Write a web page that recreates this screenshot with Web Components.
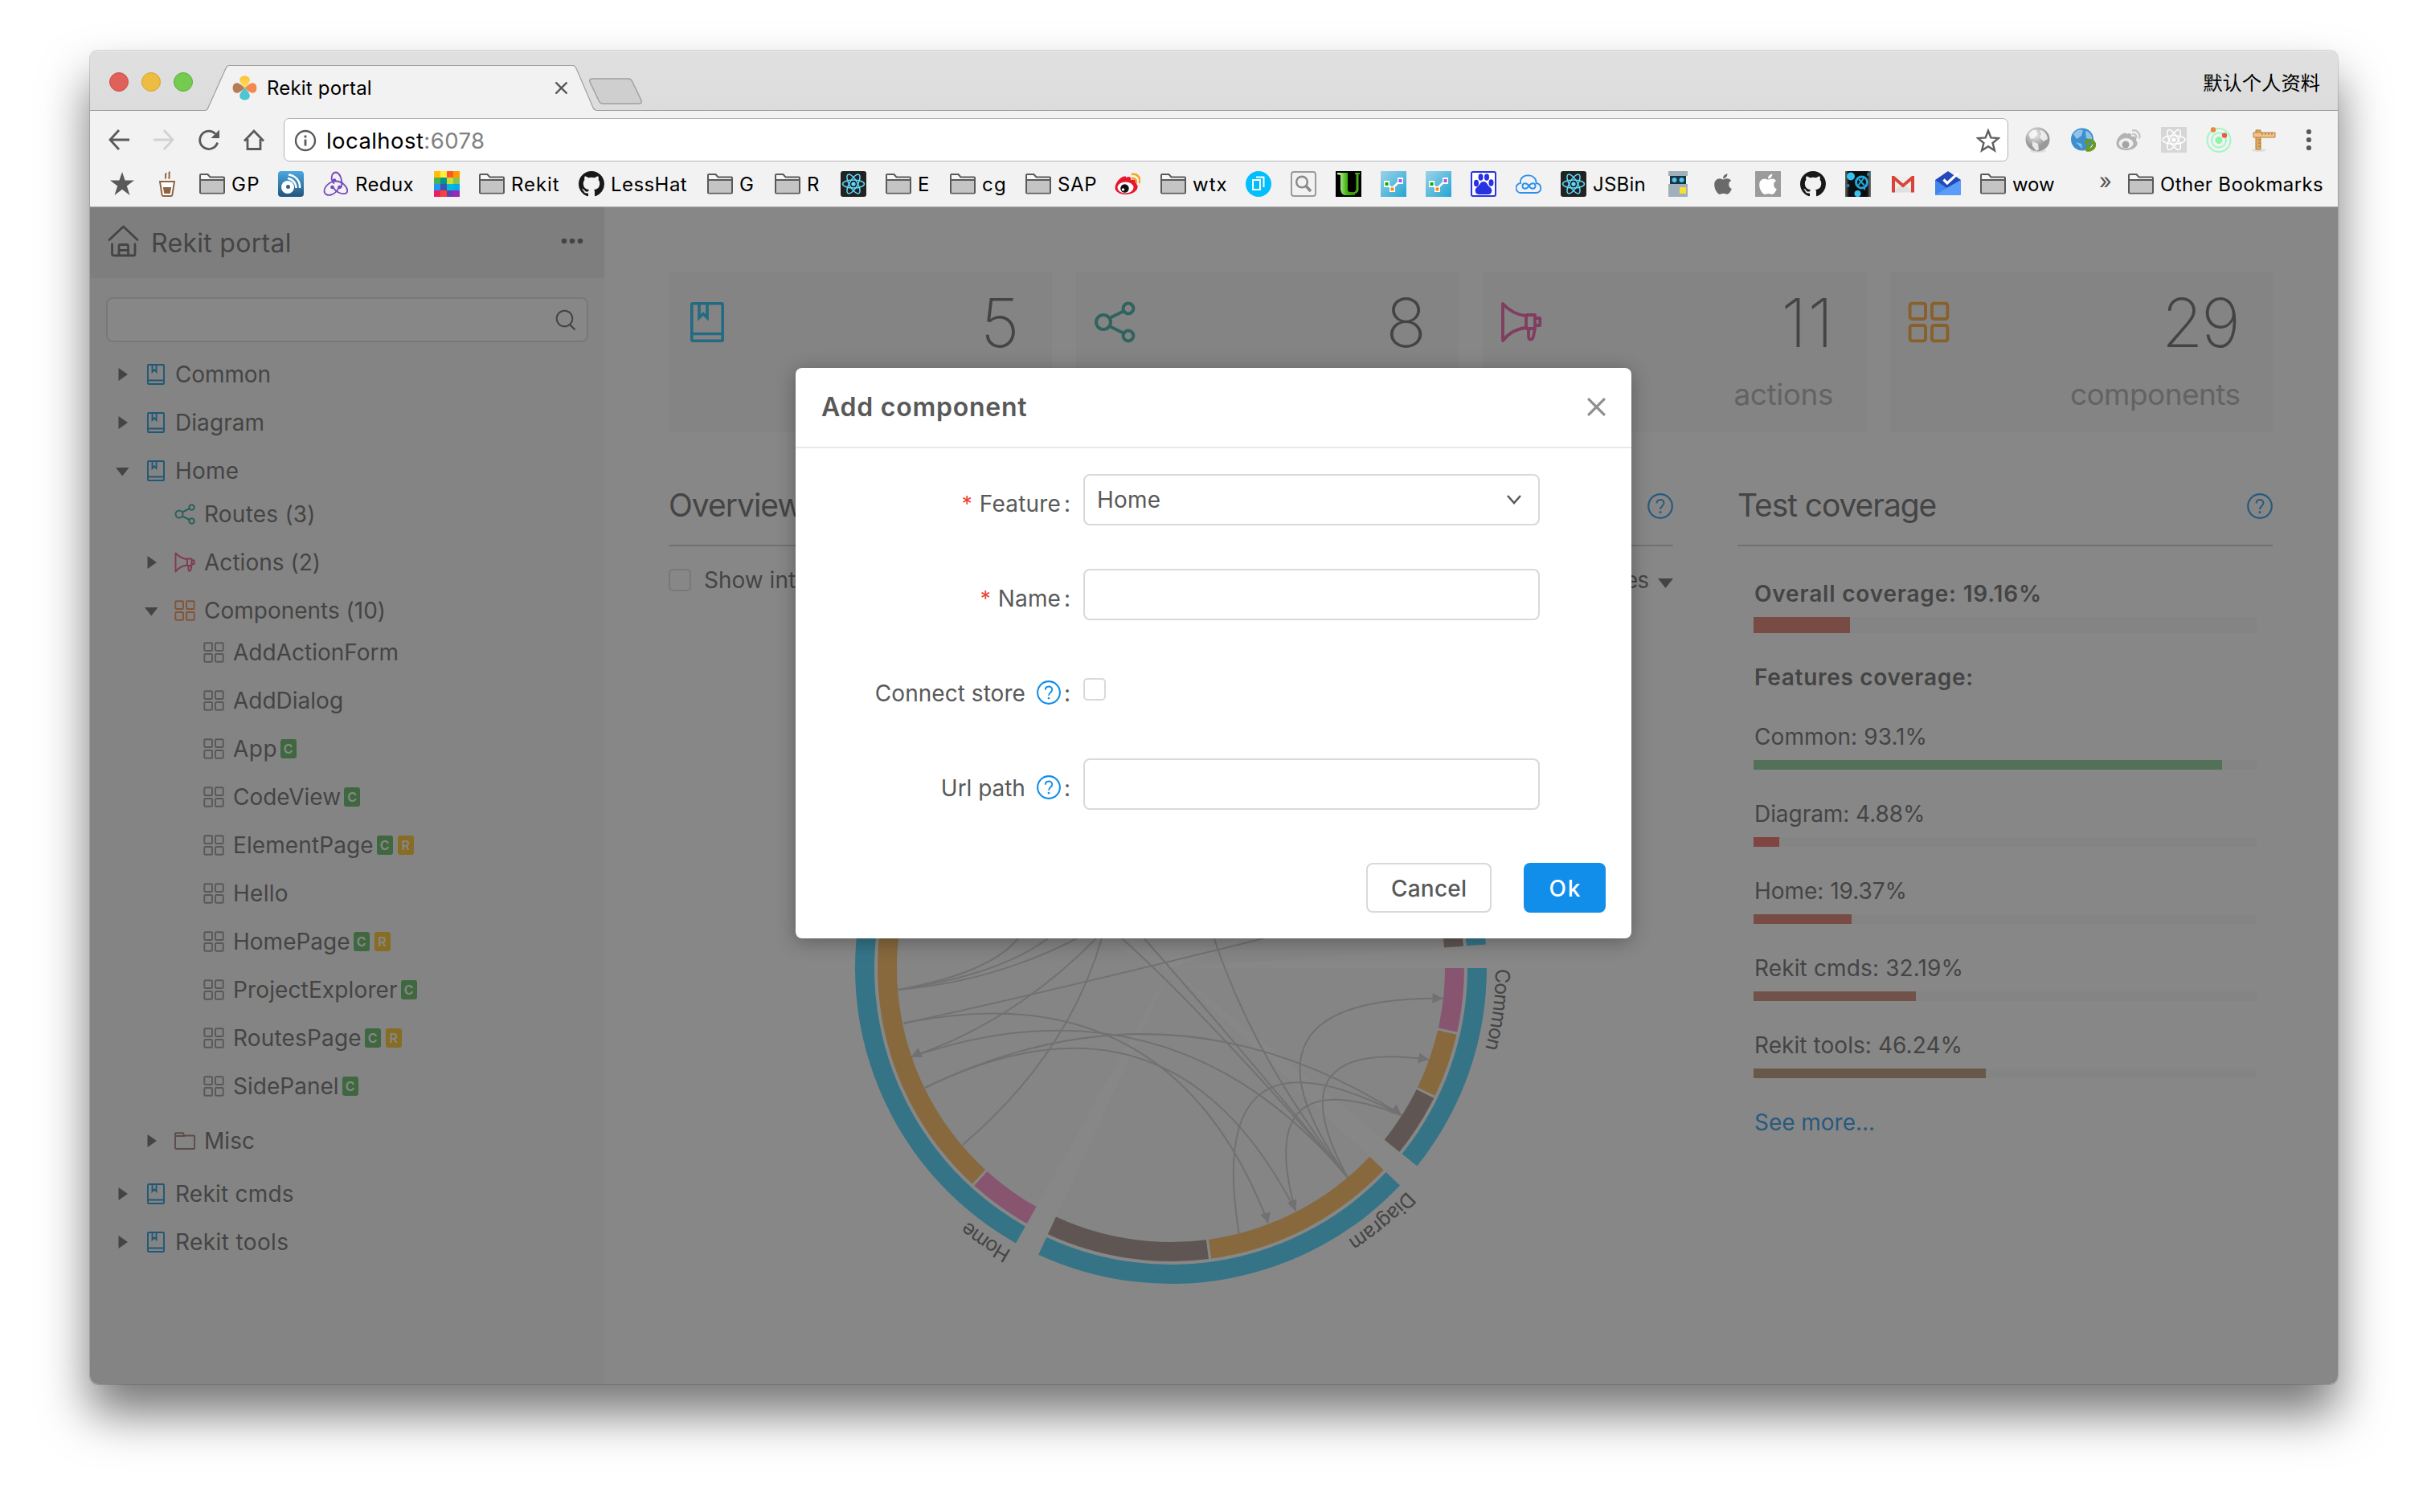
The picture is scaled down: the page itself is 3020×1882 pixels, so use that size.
<!DOCTYPE html>
<html lang="en">
<head>
<meta charset="utf-8">
<title>Rekit portal</title>
<style>
html,body{margin:0;background:#fff}
body{width:3020px;height:1882px;overflow:hidden;display:flex;justify-content:flex-start;align-items:flex-start;padding:63px 0 0 112px;box-sizing:border-box;font-family:Inter,"Liberation Sans","Noto Sans CJK SC",sans-serif;color:#595959;font-size:28px}
</style>
</head>
<body>
<browser-window></browser-window>
<script>
const ICONS = {
  back:['0 0 28 28','<path d="M14 2 3 14l11 12M3 14h24" fill="none" stroke="#5a5a5a" stroke-width="2.8"/>'],
  forward:['0 0 28 28','<path d="M14 2l11 12-11 12M25 14H1" fill="none" stroke="#d2d2d2" stroke-width="2.8"/>'],
  reload:['0 0 28 28','<path d="M24.6 17.5A11.2 11.2 0 1 1 22 6.6" fill="none" stroke="#5a5a5a" stroke-width="2.8"/><path d="M27 1.5v10.5H16.500z" fill="#5a5a5a"/>'],
  homeNav:['0 0 28 28','<path d="M2 15.500 14 3l12 12.500M6 13v12.500h16V13" fill="none" stroke="#5a5a5a" stroke-width="2.8"/>'],
  info:['0 0 28 28','<circle cx="14" cy="14" r="12" fill="none" stroke="#5a5a5a" stroke-width="2.4"/><path d="M14 12.500v8M14 7.500v3" stroke="#5a5a5a" stroke-width="2.8"/>'],
  starLine:['0 0 28 28','<path d="M14 2.500 17.200 10.600l8.800.6-6.800 5.600 2.200 8.600L14 20.700l-7.400 4.700 2.200-8.600L2 11.200l8.800-.6z" fill="none" stroke="#5f5f5f" stroke-width="2.300"/>'],
  star:['0 0 30 30','<path d="M15 0 18.600 10.600H30l-9.200 6.800L24.500 29 15 21.800 5.500 29l3.700-11.600L0 10.600h11.400z" fill="#5a5a5a"/>'],
  coffee:['0 0 20 32','<path d="M1 13h18l-2.600 16.500a2 2 0 0 1-2 1.500H5.600a2 2 0 0 1-2-1.500z" fill="#fff" stroke="#8d6546" stroke-width="2"/><path d="M4.800 20h10.400l-1.500 8H6.300z" fill="#8d6546"/><path d="M7.500 9.500c2-3-1-4 1.500-7M12 9.500c2-3-.5-5 1-9" fill="none" stroke="#8d6546" stroke-width="2"/>'],
  folder:['0 0 32 32','<path d="M1 26.500V5a1 1 0 0 1 1-1h8.500l3 3.500H30a1 1 0 0 1 1 1v18a1 1 0 0 1-1 1H2a1 1 0 0 1-1-1z" fill="#f7f7f7" stroke="#5a5a5a" stroke-width="2"/><path d="M2 11.500h28v15H2z" fill="#c4c4c4"/><path d="M1 11h30" stroke="#5a5a5a" stroke-width="2"/>'],
  feed:['0 0 32 32','<defs><linearGradient id="g" x2="0" y2="1"><stop stop-color="#4aa8e0"/><stop offset="1" stop-color="#23547f"/></linearGradient></defs><rect width="32" height="32" rx="4" fill="url(#g)"/><circle cx="12" cy="20" r="8" fill="#fff"/><circle cx="12.500" cy="19.500" r="2.500" fill="#2c6594"/><path d="M12 9a12 12 0 0 1 10.500 12M13 4.500A15 15 0 0 1 27 21" fill="none" stroke="#fff" stroke-width="2.600"/>'],
  redux:['0 0 32 32','<g fill="none" stroke="#764abc" stroke-width="1.800"><path d="M22.500 20.500C25 12 21 2 16 1.500 9.500 2 9 12 14 15.500"/><path d="M13.500 12.500C5 15 0 22 2 27c4 6 14 2 17.500-6.500"/><path d="M12.500 20c4 7 12.500 10 17 7C32.500 21 24 12 15 12.500"/></g><g fill="#764abc"><circle cx="14" cy="11.500" r="2.300"/><circle cx="20.500" cy="20" r="2.300"/><circle cx="11.500" cy="20" r="2.300"/></g>'],
  palette:['0 0 32 32', (()=>{const c=['#ffc107','#ffeb3b','#ff5722','#ff9800','#4caf50','#009688','#cddc39','#8bc34a','#2196f3','#3f51b5','#00bcd4','#03a9f4','#e91e63','#f44336','#673ab7','#9c27b0'];return c.map((f,i)=>`<rect x="${i%4*8}" y="${(i>>2)*8}" width="8" height="8" fill="${f}"/>`).join('')})()],
  github:['0 0 16 16','<path fill="#191717" d="M8 0C3.58 0 0 3.58 0 8c0 3.54 2.29 6.53 5.47 7.59.4.07.55-.17.55-.38 0-.19-.01-.82-.01-1.49-2.01.37-2.53-.49-2.69-.94-.09-.23-.48-.94-.82-1.13-.28-.15-.68-.52-.01-.53.63-.01 1.08.58 1.23.82.72 1.21 1.87.87 2.33.66.07-.52.28-.87.51-1.07-1.78-.2-3.64-.89-3.64-3.95 0-.87.31-1.59.82-2.15-.08-.2-.36-1.02.08-2.12 0 0 .67-.21 2.2.82.64-.18 1.32-.27 2-.27s1.36.09 2 .27c1.53-1.04 2.2-.82 2.2-.82.44 1.1.16 1.92.08 2.12.51.56.82 1.27.82 2.15 0 3.07-1.87 3.75-3.65 3.95.29.25.54.73.54 1.48 0 1.07-.01 1.93-.01 2.2 0 .21.15.46.55.38A8.01 8.01 0 0 0 16 8c0-4.42-3.58-8-8-8z"/>'],
  react:['0 0 32 32','<rect width="32" height="32" rx="3" fill="#222"/><g fill="none" stroke="#61dafb" stroke-width="1.500"><ellipse cx="16" cy="16" rx="13.500" ry="5"/><ellipse cx="16" cy="16" rx="13.500" ry="5" transform="rotate(60 16 16)"/><ellipse cx="16" cy="16" rx="13.500" ry="5" transform="rotate(120 16 16)"/></g><circle cx="16" cy="16" r="2.600" fill="#61dafb"/>'],
  weibo:['0 0 32 32','<path d="M14 8c4-2 7-1 6 3 5-1 8 1 7 5 4 3 1 12-12 13C6 29.500 0 25 .500 20 1 14 8 6 13 6.500c1 0 1.500.5 1 1.500z" fill="#e6162d"/><ellipse cx="13.500" cy="20.500" rx="10" ry="7" fill="#fff"/><circle cx="12.500" cy="21.500" r="5.200" fill="#111"/><circle cx="10.500" cy="23" r="1.700" fill="#fff"/><path d="M21 9c4-1 7 2 5.500 6M21 4c7-1.500 12 4.500 10 11" fill="none" stroke="#f8a01a" stroke-width="2.500"/>'],
  copy:['0 0 32 32','<circle cx="16" cy="16" r="16" fill="#00bfff"/><path d="M9 11h9v12H9zM13 7.500h9.500V20" fill="none" stroke="#fff" stroke-width="2"/>'],
  find:['0 0 32 32','<rect x="1" y="1" width="30" height="30" rx="3" fill="#f2f2f2" stroke="#9a9a9a" stroke-width="2"/><circle cx="14" cy="13.500" r="6.800" fill="none" stroke="#8a8a8a" stroke-width="2.500"/><path d="m19 18.500 6 6.500" stroke="#8a8a8a" stroke-width="3.500"/>'],
  green:['0 0 32 32','<defs><linearGradient id="g"><stop stop-color="#d8ffc0"/><stop offset=".5" stop-color="#49b818"/><stop offset="1" stop-color="#2d8a00"/></linearGradient></defs><rect width="32" height="32" fill="#000"/><path d="M2 2h13v20c0 3 1 4 4 4h5v4h-13C8 29 6 26 6 21V5L2 4z" fill="url(#g)"/><path d="M24 2h6v2h-1.500v18c0 4-2 6-6 6v-2c2 0 3-2 3-5V4H24z" fill="#49a820"/>'],
  flow:['0 0 32 32','<defs><linearGradient id="g" x2="1" y2="1"><stop stop-color="#9bd3e8"/><stop offset="1" stop-color="#24a5d3"/></linearGradient></defs><rect width="32" height="32" fill="url(#g)"/><path d="M8 16l6 6 10-10" stroke="#fff" stroke-width="2.500" fill="none"/><path d="M4 12h7v8H4zM21 8h7v8h-7zM11 19h7v7h-7z" fill="#fff"/><path d="M5.500 14h4v4h-4z" fill="#0ab000"/><path d="M22.500 10h4v4h-4z" fill="#a855f7"/><path d="M12.500 20.500h4v4h-4z" fill="#ff8c00"/>'],
  paw:['0 0 32 32','<rect x="1" y="1" width="30" height="30" rx="2" fill="#fff" stroke="#2932e1" stroke-width="2"/><g fill="#2932e1"><ellipse cx="7" cy="15" rx="3" ry="4.200"/><ellipse cx="12.500" cy="7.500" rx="3" ry="4.200"/><ellipse cx="20" cy="7.500" rx="3" ry="4.200"/><ellipse cx="25.500" cy="14.500" rx="3" ry="4.200"/><path d="M16 13c4 0 4 3 7 6 3 2.500 4 4 3 7-1 4-6 3-10 3s-9 1-10-3c-1-3 0-4.500 3-7s3-6 7-6z"/></g>'],
  cloud:['0 0 32 32','<path d="M7 27a6 6 0 0 1-1-12C5 8 11 5 15.500 5.500 21 5 26 9 25.500 15 33 16 33 26 26 27z" fill="none" stroke="#2b8ff0" stroke-width="1.800"/><path d="M16.500 18.500c-2.500-4-8-4.500-8 0s5.500 4 8 0 8-4.500 8 0-5.500 4-8 0z" fill="none" stroke="#2b8ff0" stroke-width="2"/>'],
  robot:['0 0 32 32','<path d="M4 0h24v6h-2v10h2v16H4V16h2V6H4z" fill="#9fb0ba"/><path d="M6 6h20v10H6z" fill="#17353f"/><circle cx="11.500" cy="11" r="3" fill="#4fc3f7"/><circle cx="20.500" cy="11" r="3" fill="#4fc3f7"/><path d="M18 20h8v8h-8z" fill="#f9e02e"/>'],
  apple:['0 0 384 512','<path fill="#6a6a6a" d="M318.7 268.7c-.2-36.7 16.4-64.4 50-84.8-18.8-26.9-47.2-41.7-84.7-44.6-35.500-2.8-74.3 20.7-88.500 20.700-15 0-49.400-19.700-76.400-19.700C63.3 141.2 4 184.800 4 273.500q0 39.300 14.400 81.200c12.800 36.700 59 126.700 107.200 125.200 25.200-.6 43-17.900 75.800-17.900 31.800 0 48.300 17.900 76.400 17.900 48.600-.7 90.400-82.500 102.600-119.300-65.200-30.700-61.700-90-61.700-91.900zm-56.600-164.200c27.300-32.400 24.800-61.900 24-72.500-24.100 1.400-52 16.400-67.900 34.900-17.500 19.800-27.800 44.300-25.600 71.900 26.100 2 49.900-11.400 69.500-34.300z"/>'],
  appleBox:['-87 -28 560 560','<rect x="-200" y="-100" width="800" height="800" fill="#9b9b9b"/><path fill="#fff" d="M318.7 268.7c-.2-36.7 16.4-64.4 50-84.8-18.8-26.9-47.2-41.7-84.7-44.6-35.500-2.8-74.3 20.7-88.500 20.700-15 0-49.400-19.700-76.400-19.700C63.3 141.2 4 184.800 4 273.500q0 39.300 14.400 81.200c12.800 36.700 59 126.700 107.200 125.200 25.200-.6 43-17.900 75.800-17.900 31.800 0 48.300 17.900 76.400 17.900 48.600-.7 90.400-82.500 102.600-119.300-65.200-30.700-61.700-90-61.700-91.900zm-56.600-164.200c27.300-32.400 24.800-61.900 24-72.500-24.100 1.400-52 16.400-67.900 34.900-17.500 19.800-27.800 44.300-25.600 71.900 26.100 2 49.900-11.400 69.500-34.300z"/>'],
  tech:['0 0 32 32','<defs><linearGradient id="g"><stop stop-color="#6a6a6a"/><stop offset=".15" stop-color="#0b0f12"/><stop offset=".85" stop-color="#0b0f12"/><stop offset="1" stop-color="#777"/></linearGradient></defs><rect width="32" height="32" fill="url(#g)"/><circle cx="7" cy="6.500" r="5" fill="#35c3ee"/><circle cx="15.500" cy="28" r="4" fill="#35c3ee"/><circle cx="3.500" cy="18" r="2" fill="#1d87aa"/><circle cx="20.500" cy="14" r="7" fill="none" stroke="#25a5d6" stroke-width="3"/><path d="M17 10l7 8M23 9l-7 9M22 20l3 3" stroke="#25a5d6" stroke-width="2"/><circle cx="29" cy="4" r="2" fill="#1d87aa"/>'],
  gmail:['0 0 32 32','<path d="M2 6.500h28v20H2z" fill="#eee"/><path d="M2 26.500 16 15l14 11.500z" fill="#e0e0e0"/><path d="M5 6 16 15.500 27 6h3v20.500h-4V12L16 20.500 6 12v14.500H2V6z" fill="#d9433a"/>'],
  inbox:['0 0 32 32','<path d="M0 11 16 0l16 11v17a2 2 0 0 1-2 2H2a2 2 0 0 1-2-2z" fill="#2449b8"/><path d="M0 11l16 11L0 30z" fill="#4187ee"/><path d="M32 11v17a2 2 0 0 1-2 2H0l16-10z" fill="#5a9df8"/><path d="M10.500 10.500l4.500 4.500L28.500 2.500" fill="none" stroke="#fff" stroke-width="3.200"/>'],
  rekit:['0 0 32 32','<defs><linearGradient id="g" x2="0" y2="1"><stop stop-color="#fbc02d"/><stop offset="1" stop-color="#ffe070"/></linearGradient></defs><path d="M16 16C11 11 9.500 8 9.500 5.500 10 -1 22 -1 22.500 5.500 22.500 8 21 11 16 16z" fill="url(#g)"/><path d="M16 16c5-5 8-6.500 10.500-6.500 6.500.5 6.500 12.500 0 13C24 22.500 21 21 16 16z" fill="#f5894d"/><path d="M16 16c5 5 6.500 8 6.500 10.500-.5 6.500-12.500 6.500-13 0C9.500 24 11 21 16 16z" fill="#4cc6cf"/><path d="M16 16c-5 5-8 6.500-10.500 6.500-6.500-.5-6.500-12.500 0-13C8 9.500 11 11 16 16z" fill="#b57c58"/>'],
  globe:['0 0 32 32','<defs><radialGradient id="g" cx=".4" cy=".3"><stop stop-color="#eee"/><stop offset="1" stop-color="#999"/></radialGradient></defs><ellipse cx="16" cy="30" rx="10" ry="2" fill="#ddd"/><circle cx="15.500" cy="15.500" r="15" fill="url(#g)"/><path d="M4 9c3-5 7-6 10-5l1 5-4 5-4 1zM18 4c6 0 10 6 10 11l-5 3-5-5 2-4zM9 18l7 3 1 7-3 2-5-6z" fill="#fafafa" opacity=".8"/>'],
  globeBlue:['0 0 32 32','<circle cx="15" cy="15.500" r="14" fill="#3f8fcf"/><path d="M4 9c4-6 9-6 12-5l-2 7-6 4zM19 5c6 1 9 7 8 11l-7-2zM7 19l7 2 1 6z" fill="#9fcdee" opacity=".85"/><path d="M19 21c3-6 9-5 11 0 1 6-6 9-10 7M25 22l-5 6" fill="none" stroke="#6b9a1f" stroke-width="4.200"/>'],
  weiboGray:['0 0 32 32','<path d="M14 9c4-2 7-1 6 3 5-1 7 1 6 5 4 3 1 11-11 12C6 29.500 1 25 1.500 20 2 14 8 7 13 7.500c1 0 1.500.5 1 1.500z" fill="#b3b3b3"/><ellipse cx="13.500" cy="20.500" rx="9" ry="6.500" fill="#f0f0f0"/><circle cx="13" cy="22" r="4.500" fill="#a4a4a4"/><path d="M21 9c4-1 6 2 5 5M21 4.500c6-1.500 11 4 9 10" fill="none" stroke="#c4c4c4" stroke-width="2.300"/>'],
  reactGray:['0 0 32 32','<rect width="32" height="32" fill="#d6d6d6"/><g fill="none" stroke="#fff" stroke-width="1.500"><ellipse cx="16" cy="16" rx="14" ry="5.200"/><ellipse cx="16" cy="16" rx="14" ry="5.200" transform="rotate(60 16 16)"/><ellipse cx="16" cy="16" rx="14" ry="5.200" transform="rotate(120 16 16)"/></g><circle cx="16" cy="16" r="2.600" fill="#fff"/>'],
  radar:['0 0 32 32','<g fill="none" stroke="#a0f7c4" stroke-width="2"><circle cx="16" cy="16.500" r="14.500"/><circle cx="16" cy="16.500" r="9"/></g><circle cx="16" cy="16.500" r="4.500" fill="#8ff5a8"/><circle cx="9" cy="3.500" r="3.200" fill="#e58a3c"/><circle cx="23" cy="10.500" r="3.200" fill="#de6043"/>'],
  ruler:['0 0 32 32','<ellipse cx="10" cy="29" rx="9" ry="1.800" fill="#ddd"/><path d="M6 4h6v24H6z" fill="#dfa965" stroke="#b27a36"/><path d="M3 7h27v6H3z" fill="#efc48a" stroke="#b97f3c"/><path d="M14 7v3M18 7v3M22 7v3M26 7v3M9 16h3M9 20h3M9 24h3" stroke="#a06a2c"/>'],
  dots:['0 0 32 32','<g fill="#5a5a5a"><circle cx="16" cy="6" r="3.100"/><circle cx="16" cy="16" r="3.100"/><circle cx="16" cy="26" r="3.100"/></g>'],
  x:['0 0 24 24','<path d="M3 3l18 18M21 3 3 21" stroke="currentColor" stroke-width="3.200" stroke-linecap="round"/>'],
  house:['0 0 40 40','<g fill="none" stroke="currentColor" stroke-width="2.800" stroke-linecap="round" stroke-linejoin="round"><path d="M2 18.500 19.500 2 37 18.500"/><path d="M5.500 24v12q0 2 2 2h25q1.500 0 1.500-2V24"/><path d="M14 37V26.500q0-2 2-2h7.500q2 0 2 2V37M14 31.500h11.500"/></g>'],
  ellipsis:['0 0 28 10','<g fill="currentColor"><circle cx="4" cy="5" r="3.300"/><circle cx="14" cy="5" r="3.300"/><circle cx="24" cy="5" r="3.300"/></g>'],
  search:['0 0 28 28','<circle cx="12.500" cy="12.500" r="9.800" fill="none" stroke="currentColor" stroke-width="2"/><path d="m19 20 6.500 6.500" stroke="currentColor" stroke-width="2.300"/>'],
  book:['0 0 28 28','<g fill="none" stroke="currentColor" stroke-width="1.900"><rect x="4" y="2" width="20" height="24" rx="1"/><path d="M4 21.500h20M9.500 2v9l2.500-2.600L14.500 11V2"/></g>'],
  bookBig:['0 0 56 56','<g fill="none" stroke="currentColor" stroke-width="3.600"><rect x="8.800" y="4.800" width="38.400" height="46.400" rx="1.500"/><path d="M8 42.500h40M18 5v17.500l5-5 5 5V5"/></g>'],
  share:['0 0 28 28','<g fill="none" stroke="currentColor" stroke-width="2"><circle cx="7" cy="14" r="4.500"/><circle cx="22.500" cy="5.500" r="3.200"/><circle cx="22.500" cy="22.500" r="3.200"/><path d="m10.800 11.500 9-4.500M10.800 16.500l9 4.500"/></g>'],
  horn:['0 0 28 28','<g fill="none" stroke="currentColor" stroke-width="1.900" stroke-linejoin="round"><path d="M2.500 2.500v23c4-5 9-7.500 14.500-8V10C11.500 9.500 6.500 7 2.500 2.500zM17 9.500h5.500v8.500H17M23 11.500h2.600v4.500H23M18.500 18v4.500c0 3 2 3 3 .5l1-5"/></g>'],
  grid:['0 0 28 28','<g fill="none" stroke="currentColor" stroke-width="1.900"><rect x="2.300" y="2.300" width="9.700" height="9.700" rx="1.300"/><rect x="16" y="2.300" width="9.700" height="9.700" rx="1.300"/><rect x="2.300" y="16" width="9.700" height="9.700" rx="1.300"/><rect x="16" y="16" width="9.700" height="9.700" rx="1.300"/></g>'],
  misc:['0 0 28 28','<path d="M2 23V5q0-.800.800-.800h9l1.500 3.300h12q.800 0 .800.800V23q0 1-1 1H3q-1 0-1-1zM2 8h12" fill="none" stroke="currentColor" stroke-width="1.900"/>'],
  right:['0 0 24 24','<path d="M7.500 4l11.500 8-11.500 8z" fill="currentColor"/>'],
  down:['0 0 24 24','<path d="M4 8h16.500l-8.200 10.500z" fill="currentColor"/>'],
  caret:['0 0 24 24','<path d="M3 7h19l-9.500 12z" fill="currentColor"/>'],
  chevron:['0 0 20 14','<path d="m2 2 8 9 8-9" fill="none" stroke="currentColor" stroke-width="2.500"/>'],
  help:['0 0 32 32','<circle cx="16" cy="16" r="14.800" fill="none" stroke="currentColor" stroke-width="2.200"/><path d="M11.500 12.500c0-6 9-6 9-.5 0 4-4.500 4-4.500 8" fill="none" stroke="currentColor" stroke-width="2"/><circle cx="16" cy="23.500" r="1.500" fill="currentColor"/>']
};

class Base extends HTMLElement {
  connectedCallback(){
    if(this.shadowRoot) return;
    this.attachShadow({mode:'open'}).innerHTML = `<style>*{box-sizing:border-box}${this.css()}</style>${this.html()}`;
  }
  a(n,d=''){return this.getAttribute(n) ?? d}
  css(){return ''}
  html(){return '<slot></slot>'}
}
const def=(n,c)=>customElements.define(n,c);
const icon=(n,w,h=w)=>`<ui-icon name="${n}" w="${w}" h="${h}"></ui-icon>`;
const fit=(t,w)=>`<fit-text w="${w}">${t}</fit-text>`;

def('ui-icon', class extends Base {
  css(){return `:host{display:inline-flex;flex:none;width:${this.a('w')}px;height:${this.a('h')}px}svg{display:block;width:100%;height:100%}`}
  html(){const [vb,b]=ICONS[this.a('name')];return `<svg viewBox="${vb}">${b}</svg>`}
});

/* Text tracked so its ink spans the given width. */
const fits=new Set();
def('fit-text', class extends Base {
  connectedCallback(){super.connectedCallback();fits.add(this)}
  css(){return `:host{display:inline-block;white-space:nowrap;flex:none}`}
  fit(){
    const n=this.textContent.length, fs=parseFloat(getComputedStyle(this).fontSize);
    const nat=this.getBoundingClientRect().width, target=+this.a('w')+fs*.11;
    if(n>1){const ls=(target-nat)/(n-1);this.style.letterSpacing=ls.toFixed(3)+'px';this.style.marginRight=(-ls).toFixed(3)+'px'}
  }
});

def('browser-tab', class extends Base {
  css(){return `:host{position:relative;display:flex;align-items:center;width:486px;height:57px;padding:0 35px 0 33px;color:#000;font-size:24px}
  .bg{position:absolute;left:0;top:0;width:486px;height:57px}
  ui-icon{position:relative}fit-text{position:relative;margin-left:12px}.c{margin-left:auto;color:#555}`}
  html(){return `<svg class="bg" viewBox="0 0 486 57"><path d="M0 57V56q2 0 3-3L25 4q1.500-3.500 4-3.500H457q2.500 0 4 3.500L482 53q1 3 4 3v1z" fill="#f2f2f2"/><path d="M0 56q2 0 3-3L25 4q1.500-3.500 4-3.500H457q2.500 0 4 3.500L482 53q1 3 4 3" fill="none" stroke="#a0a0a0" stroke-width="1.200"/></svg>
  ${icon('rekit',31)}${fit('Rekit portal',128)}<span class="c">${icon('x',17)}</span>`}
});

def('tab-strip', class extends Base {
  css(){return `:host{display:flex;height:75px;background:linear-gradient(#e0e0e0,#dcdcdc);box-shadow:inset 0 -1px #a0a0a0,inset 0 1px #ededed;padding-left:24px;color:#000}
  .l{display:flex;gap:16px;align-items:center;padding-top:3px}.l i{width:24px;height:24px;border-radius:50%;border:1px solid}
  browser-tab{margin:18px 0 0 16px}.n{margin:34px 0 0 -10px;width:68px;height:33px}
  .p{margin-left:auto;padding:3px 22px 0 0;align-self:center;font:24.300px "Noto Sans CJK SC",sans-serif;line-height:32px}`}
  html(){return `<div class="l"><i style="background:#e0605a;border-color:#cd4b45"></i><i style="background:#edbd41;border-color:#d6a32c"></i><i style="background:#74cb50;border-color:#58b135"></i></div>
  <browser-tab></browser-tab><svg class="n" viewBox="0 0 68 33"><path d="M5 1h45q3 0 4.500 3L66 28q1 4-3 4H18q-3 0-4.500-3L2 5q-1-4 3-4z" fill="#cfcfcf" stroke="#a0a0a0" stroke-width="1.500"/></svg>
  <div class="p">默认个人资料</div>`}
});

def('nav-bar', class extends Base {
  css(){return `:host{display:flex;align-items:center;height:72px;padding-left:22px}
  .n{display:flex;gap:28px}.o{display:flex;align-items:center;margin-left:23px;width:2146px;height:54px;border:1.500px solid #b4b4b4;border-radius:7px;background:#fff;padding:1px 9px 0 12px;font-size:27.500px;color:#000}
  fit-text{margin:1px 0 0 12px}fit-text span{color:#808080}.s{margin-left:auto;display:flex}.e{display:flex;gap:24.200px;margin-left:21px}`}
  html(){return `<div class="n">${['back','forward','reload','homeNav'].map(n=>icon(n,28)).join('')}</div>
  <div class="o">${icon('info',28)}${fit('localhost<span>:6078</span>',194)}<span class="s">${icon('starLine',30)}</span></div>
  <div class="e">${['globe','globeBlue','weiboGray','reactGray','radar','ruler','dots'].map(n=>icon(n,32)).join('')}</div>`}
});

/* icon, start, label, label width */
const MARKS=[['star',137],['coffee',198],['folder',248,'GP',32],['feed',346],['redux',402,'Redux',70],['palette',540],['folder',596,'Rekit',57],['github',720,'LessHat',92],['folder',880,'G',16],['folder',964,'R',14],['react',1046],['folder',1102,'E',12],['folder',1182,'cg',27],['folder',1276,'SAP',46],['weibo',1387],['folder',1444,'wtx',40],['copy',1550],['find',1606],['green',1662],['flow',1718],['flow',1774],['paw',1830],['cloud',1886],['react',1942,'JSBin',63],['robot',2072],['apple',2133],['appleBox',2184],['github',2240],['tech',2296],['gmail',2352],['inbox',2408],['folder',2464,'wow',50],['more',2612],['folder',2648,'Other Bookmarks',200]];
def('bookmark-bar', class extends Base {
  css(){return `:host{display:flex;height:48px;padding:0 0 10px 25px;border-bottom:1.500px solid #a9a9a9;color:#000;font-size:24px}
  .b{display:flex;align-items:center;gap:8px;flex:none}fit-text{padding-top:1px}.m{font-size:27px;color:#555;line-height:20px;padding-bottom:6px}`}
  html(){return MARKS.map(([i,x,t,w],k)=>{const nx=MARKS[k+1]?.[1]??2896;
    const ic=i==='more'?'<span class="m">»</span>':i==='coffee'?icon(i,20,32):i==='star'?icon(i,30):i==='apple'?icon(i,22,30):icon(i,32);
    return `<div class="b" style="width:${nx-x}px">${ic}${t?fit(t,w):''}</div>`}).join('')}
});

def('tree-row', class extends Base {
  css(){const l=+this.a('level','0');return `:host{display:flex;align-items:center;height:60px;padding-left:${28+36*l}px}
  .t{width:24px;display:flex;color:#595959}.i{width:32px;margin:0 8px 0 14px;display:flex;justify-content:center;color:${this.a('color')}}
  .g{display:flex;gap:6px;margin-left:4px}.g b{width:20px;height:24px;border-radius:3px;font:600 16px/24px Inter;color:#fff;text-align:center}.C{background:#4cb24f}.R{background:#ffbb08}`}
  html(){const o=this.a('open');const tags=this.a('tags');
    return `<span class="t">${o?icon(o,24):''}</span><span class="i">${icon(this.a('icon'),28)}</span><fit-text w="${this.a('w')}">${this.a('label')}</fit-text>${tags?`<span class="g">${[...tags].map(c=>`<b class="${c}">${c}</b>`).join('')}</span>`:''}`}
});

def('side-panel', class extends Base {
  css(){return `:host{display:flex;flex-direction:column;background:#f7f7f7}
  header{display:flex;align-items:center;height:88px;background:#e9e9e9;padding:0 26px 4px 22px;font-size:32px}
  header fit-text{margin:4px 0 0 14px}header .e{margin-left:auto;display:flex}
  .s{display:flex;justify-content:flex-end;align-items:center;height:56px;margin:24px 20px 10px;padding-right:12px;border:2px solid #d9d9d9;border-radius:8px;background:#fff}
  .d1{margin-top:-6px}.d2{margin-top:-8px}.u2{margin-top:8px}.u1{margin-top:6px}`}
  html(){
    const B='#0288d1',G='#8a8a8a';
    const r=(l,o,i,c,t,w,tags='',cls='')=>`<tree-row class="${cls}" level="${l}" open="${o}" icon="${i}" color="${c}" label="${t}" w="${w}" tags="${tags}"></tree-row>`;
    return `<header>${icon('house',40)}${fit('Rekit portal',171)}<span class="e">${icon('ellipsis',28,10)}</span></header>
    <div class="s">${icon('search',28)}</div>
    ${r(0,'right','book',B,'Common',116)}${r(0,'right','book',B,'Diagram',108)}${r(0,'down','book',B,'Home',76)}
    ${r(1,'','share','#1a9e90','Routes (3)',135.500,'','d1')}${r(1,'right','horn','#ec407a','Actions (2)',142)}${r(1,'down','grid','#f08036','Components (10)',223)}
    ${r(2,'','grid',G,'AddActionForm',203,'','d2')}${[['AddDialog',134],['App',51.5,'C'],['CodeView',131,'C'],['ElementPage',171.5,'CR'],['Hello',65.5],['HomePage',142.5,'CR'],['ProjectExplorer',201.5,'C'],['RoutesPage',156.5,'CR'],['SidePanel',128.5,'C']].map(([t,w,g])=>r(2,'','grid',G,t,w,g||'')).join('')}
    ${r(1,'right','misc','#8d6e63','Misc',60,'','u2')}${r(0,'right','book',B,'Rekit cmds',144.500,'','u1')}${r(0,'right','book',B,'Rekit tools',138)}`}
});

def('stat-card', class extends Base {
  css(){return `:host{display:flex;justify-content:space-between;background:#f7f7f7;height:200px;padding:0 40px 0 20px}
  .i{color:${this.a('color')};padding-top:35px}.r{display:flex;flex-direction:column;align-items:flex-end}
  .n{font-size:84px;font-weight:200;line-height:100px;height:100px;margin-top:14px}.l{font-size:37px;line-height:44px;color:#a5a5a5;margin-top:17px}`}
  html(){return `<span class="i">${icon(this.a('icon'),56)}</span><div class="r"><div class="n">${fit(this.a('n'),this.a('nw'))}</div><div class="l">${this.a('label')?fit(this.a('label'),this.a('w')):''}</div></div>`}
});

def('section-head', class extends Base {
  css(){return `:host{display:flex;justify-content:space-between;align-items:center;height:82px;padding-bottom:20px;border-bottom:2px solid #c8c8c8;font-size:39px}.h{color:#108ee9;display:flex;padding-top:3px}`}
  html(){return `${fit(this.a('label'),this.a('w'))}<span class="h">${icon('help',32)}</span>`}
});

def('coverage-item', class extends Base {
  css(){const h=this.a('h','12');return `:host{display:block}.t{height:40px;line-height:40px;padding:1px 0 0 1px;font-weight:${this.a('bold')?600:400}}
  .b{margin-top:10px;height:${h}px;background:#f7f7f7}.f{height:100%;width:${this.a('v')}%;background:${this.a('color')}}`}
  html(){return `<div class="t">${fit(this.a('label'),this.a('w'))}</div>${this.a('v')?'<div class="b"><div class="f"></div></div>':''}`}
});

def('feature-diagram', class extends Base {
  css(){return `:host{display:block}svg{display:block;width:1250px;height:900px}`}
  html(){
    const cx=1457,cy=1205,p=(r,d)=>{const a=d*Math.PI/180;return (cx+r*Math.cos(a)).toFixed(2)+' '+(cy+r*Math.sin(a)).toFixed(2)};
    const arc=(a,b,r0,r1,f)=>`<path fill="${f}" d="M${p(r1,a)}A${r1} ${r1} 0 0 1 ${p(r1,b)}L${p(r0,b)}A${r0} ${r0} 0 0 0 ${p(r0,a)}Z"/>`;
    const B='#32cfff',O='#ffb448',P='#ff82c5',W='#9b827a';
    const sect=[[0,38.8],[43.5,114.8],[119.4,200],[340,355.7]];
    const bg=sect.map(([a,b])=>`<path fill="#fafafa" d="M${cx} ${cy}L${p(341,a)}A341 341 0 0 1 ${p(341,b)}Z"/>`).join('');
    const out=sect.map(([a,b])=>arc(a,b,369,393,B)).join('');
    const inn=[[0,12.6,P],[13.1,25.8,O],[26.3,38.8,W],[43.5,82.1,O],[82.6,114.8,W],[119.4,132.1,P],[132.6,200,O],[345,355.7,W]].map(([a,b,c])=>arc(a,b,341,365,c)).join('');
    const C=`${cx} ${cy}`;
    const links=['M1117.500 1232Q1232 1211 1267 1168','M1117.500 1232Q1244 1213 1304 1168','M1117.500 1232Q1236 1222 1340 1168','M1124.400 1273.700Q1290 1238 1572.700 1168',
      `M1124.400 1273.700Q${C} 1578 1522.700`,'M1364 1168Q1262 1272 1133.600 1315.700',`M1676.600 1465Q${C} 1133.600 1315.700`,'M1371 1168Q1329 1313 1197.900 1425',
      `M1150.800 1354Q${C} 1743.800 1388`,`M1150.800 1354Q${C} 1612 1507`,'M1676.600 1465Q1497 1258 1396 1168','M1676.600 1465Q1510 1265 1423.500 1168','M1676.600 1465Q1560 1317 1510.700 1168',
      'M1676.600 1465Q1515 1240 1795.500 1242.700','M1676.600 1465Q1582 1291.600 1778 1319','M1541.700 1535Q1497 1260 1743.800 1388','M1612 1507Q1559 1317 1743.800 1388'];
    const heads=[[1578,1522.7,75],[1133.6,1315.7,155],[1743.8,1388,38],[1612,1507,70],[1795.5,1242.7,1],[1778,1319,10]].map(([x,y,d])=>`<path d="M0 0-13-6.500V6.500z" transform="translate(${x} ${y}) rotate(${d})"/>`).join('');
    const lab=(id,t,a,len)=>`<path id="${id}" fill="none" d="M${p(404,a)}A404 404 0 0 1 ${p(404,a+40)}"/><text font-size="25" textLength="${len}" font-family="Inter" fill="#595959"><textPath href="#${id}">${t}</textPath></text>`;
    return `<svg viewBox="832 764 1250 900">${bg}${out}${inn}<g fill="none" stroke="#c8c8c8" stroke-width="2">${links.map(d=>`<path d="${d}"/>`).join('')}</g><g fill="#c8c8c8">${heads}</g>${lab('c','Common',.1,101)}${lab('d','Diagram',43.4,96)}${lab('h','Home',119.4,66)}</svg>`}
});

def('dashboard-main', class extends Base {
  css(){return `:host{display:block;padding:80px 81px 0 80px;background:#fff;overflow:hidden}
  .cards{display:grid;grid-template-columns:repeat(4,1fr);gap:30px;margin-bottom:60px}
  .cols{display:grid;grid-template-columns:1250px 1fr;column-gap:80px}
  .bar{display:flex;align-items:center;height:84px}.cb{width:28px;height:28px;border:2px solid #d9d9d9;border-radius:5px;margin-right:16px;background:#fff}
  .r{margin-left:auto;display:flex;align-items:center;gap:8px}.r ui-icon{margin:5px -2px 0 0}
  .cov{display:flex;flex-direction:column;gap:34px;padding:38px 20px 0}.more{color:#108ee9;height:40px;line-height:40px;padding:1px 0 0 1px}`}
  html(){return `<div class="cards"><stat-card icon="bookBig" color="#03b8f5" n="5" nw="41"></stat-card><stat-card icon="share" color="#26a69a" n="8" nw="42"></stat-card><stat-card icon="horn" color="#f0479f" n="11" nw="56" label="actions" w="120"></stat-card><stat-card icon="grid" color="#ff9d1a" n="29" nw="89" label="components" w="208"></stat-card></div>
  <div class="cols"><section><section-head label="Overview" w="163"></section-head>
  <div class="bar"><span class="cb"></span>${fit('Show int',111)}<span class="r">${fit('es',27)}${icon('caret',24)}</span></div>
  <feature-diagram></feature-diagram></section>
  <section><section-head label="Test coverage" w="244"></section-head><div class="cov">
  <coverage-item bold="1" label="Overall coverage: 19.16%" w="354" v="19.16" h="20" color="#da6958"></coverage-item>
  <coverage-item bold="1" label="Features coverage:" w="269"></coverage-item>
  <coverage-item label="Common: 93.1%" w="212" v="93.1" color="#7ac889"></coverage-item>
  <coverage-item label="Diagram: 4.88%" w="209.500" v="5.1" color="#ed5752"></coverage-item>
  <coverage-item label="Home: 19.37%" w="187" v="19.5" color="#da6958"></coverage-item>
  <coverage-item label="Rekit cmds: 32.19%" w="257" v="32.19" color="#c87a61"></coverage-item>
  <coverage-item label="Rekit tools: 46.24%" w="256" v="46.24" color="#b18964"></coverage-item>
  <div class="more">${fit('See more...',147)}</div></div></section></div>`}
});

def('form-row', class extends Base {
  css(){return `:host{display:flex;align-items:center;height:64px}
  .l{width:358px;display:flex;justify-content:flex-end;align-items:center;padding:9px 16px 0 0;line-height:32px}
  .q{color:#f04134;margin-right:9px;font-size:26px}.h{color:#108ee9;display:flex;margin:-2px 0 0 14px}.c{margin-left:4px}
  .in{width:568px;height:64px;border:2px solid #d9d9d9;border-radius:8px;display:flex;align-items:center;justify-content:space-between;padding:0 20px 0 15px}
  .cb{width:28px;height:28px;border:2px solid #d9d9d9;border-radius:5px}`}
  html(){const k=this.a('kind');return `<div class="l">${this.hasAttribute('req')?'<span class="q">*</span>':''}${fit(this.a('label'),this.a('w'))}${this.hasAttribute('help')?`<span class="h">${icon('help',30)}</span>`:''}<span class="c">:</span></div>
  ${k==='check'?'<div class="cb"></div>':`<div class="in">${k==='select'?fit('Home',76)+icon('chevron',20,14):''}</div>`}`}
});

def('component-dialog', class extends Base {
  css(){return `:host{display:block;width:1040px;height:710px;background:#fff;border-radius:8px;box-shadow:0 4px 24px rgba(0,0,0,.3)}
  header{display:flex;justify-content:space-between;align-items:center;height:100px;border-bottom:2px solid #e9e9e9;padding:0 31px 2px 32px;font-size:32px;font-weight:600}
  .x{color:#919191;display:flex}.f{display:flex;flex-direction:column;gap:54px;padding-top:32px}
  footer{display:flex;justify-content:flex-end;gap:40px;padding:66px 32px 0 0;font-weight:500}
  .b{height:62px;border-radius:8px;display:flex;align-items:center;justify-content:center;padding-top:2px}
  .c{width:156px;border:2px solid #d9d9d9}.o{width:102px;background:#108ee9;color:#fff}`}
  html(){return `<header>${fit('Add component',252)}<span class="x">${icon('x',25)}</span></header>
  <div class="f"><form-row req kind="select" label="Feature" w="98"></form-row><form-row req kind="text" label="Name" w="75"></form-row><form-row help kind="check" label="Connect store" w="184"></form-row><form-row help kind="text" label="Url path" w="102"></form-row></div>
  <footer><div class="b c">${fit('Cancel',91)}</div><div class="b o">${fit('Ok',36)}</div></footer>`}
});

def('browser-window', class extends Base {
  css(){return `:host{display:flex;flex-direction:column;width:2797px;height:1660px;flex:none;border-radius:10px;overflow:hidden;background:#f2f2f2;box-shadow:0 0 0 1px rgba(0,0,0,.14),0 36px 60px rgba(0,0,0,.54)}
  .page{position:relative;display:grid;grid-template-columns:640px 1fr;height:1465px;overflow:hidden}
  .mask{position:absolute;inset:0;background:rgba(55,55,55,.6);display:flex;justify-content:center;align-items:flex-start;padding:200px 1px 0 0}`}
  html(){return `<tab-strip></tab-strip><nav-bar></nav-bar><bookmark-bar></bookmark-bar><div class="page"><side-panel></side-panel><dashboard-main></dashboard-main><div class="mask"><component-dialog></component-dialog></div></div>`}
});
fits.forEach(f=>f.fit());
</script>
</body>
</html>
